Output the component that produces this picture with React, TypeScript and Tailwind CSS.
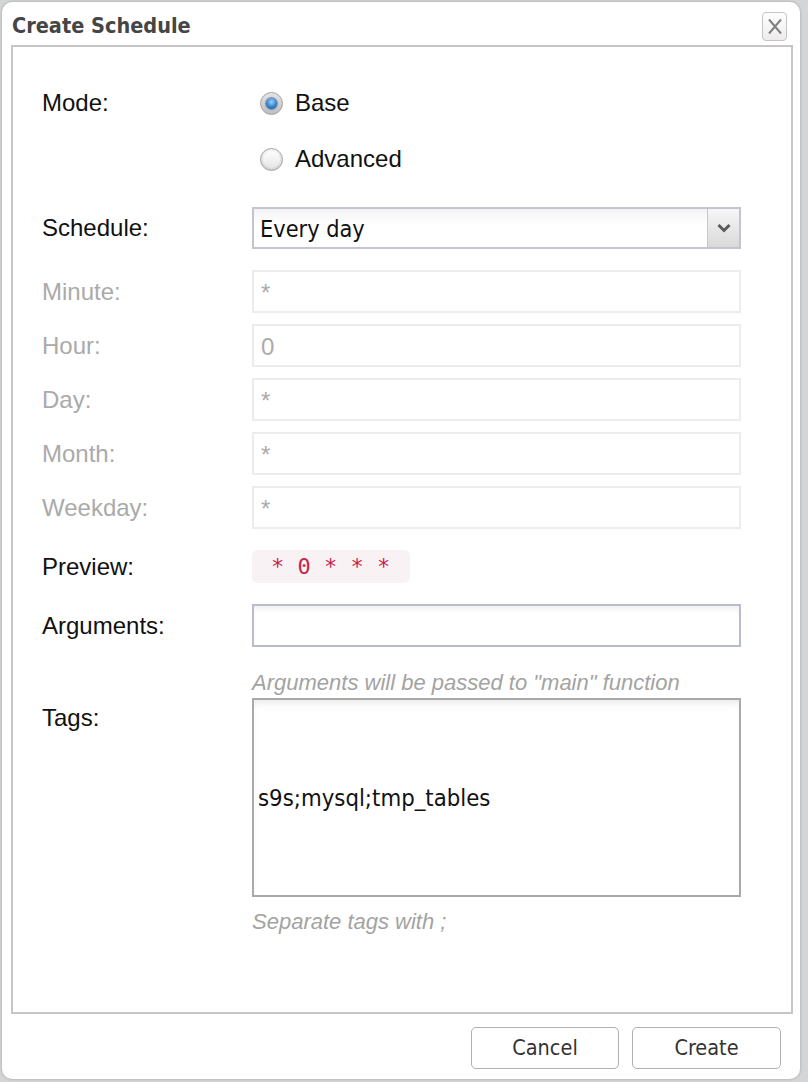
import React from "react";

const TAHOMA = { fontFamily: '"DejaVu Sans Condensed", "DejaVu Sans", sans-serif' };
const HELV = { fontFamily: '"Liberation Sans", Arial, sans-serif' };
const MONO = { fontFamily: '"DejaVu Sans Mono", "Liberation Mono", monospace' };

function Radio({ checked, label }: { checked: boolean; label: string }) {
  return (
    <div className="h-[44px] flex items-center pl-[8px] gap-[12px]">
      <div
        className={
          "w-[23px] h-[23px] rounded-full border border-[#a3a3a3] flex items-center justify-center " +
          (checked
            ? "bg-[linear-gradient(#e4e4e4,#bdbdbd)]"
            : "bg-[linear-gradient(#f4f4f4,#d2d2d2)]")
        }
      >
        {checked ? (
          <div className="w-[11px] h-[11px] rounded-full bg-[radial-gradient(circle_at_50%_35%,#9fd0f5,#2f7cc8_60%,#1c5d9e)] shadow-[0_0_0_1px_#6d8fb3]" />
        ) : (
          <div className="w-[17px] h-[17px] rounded-full bg-[linear-gradient(#fdfdfd,#e6e6e6)]" />
        )}
      </div>
      <span className="text-[24px] text-[#111]" style={HELV}>
        {label}
      </span>
    </div>
  );
}

function DisabledRow({ label, value }: { label: string; value: string }) {
  return (
    <div className="flex mt-[11px] first:mt-0">
      <div className="w-[210px] h-[43px] flex items-center text-[24px] text-[#aaaaaa]" style={HELV}>
        {label}
      </div>
      <div className="w-[489px] h-[43px] border-2 border-[#ececec] flex items-center pl-[7px] pt-[2px] text-[24px] text-[#ababab]" style={HELV}>
        {value}
      </div>
    </div>
  );
}

export default function App() {
  return (
    <div className="w-[808px] h-[1082px] bg-[#d3d5d6] pl-[2px] pt-[2px] overflow-hidden">
      <div className="w-[798px] h-[1077px] bg-white rounded-[10px] flex flex-col shadow-[0_0_3px_rgba(0,0,0,0.25)]">
        {/* header */}
        <div className="h-[43px] pt-[5px] flex items-center justify-between pl-[10px] pr-[13px]">
          <span className="text-[21.5px] font-bold text-[#454545]" style={TAHOMA}>
            Create Schedule
          </span>
          <div className="w-[25px] h-[29px] rounded-[4px] border border-[#c4c4c4] bg-[linear-gradient(#ffffff,#ececec)] flex items-center justify-center">
            <svg width="16" height="19" viewBox="0 0 16 19">
              <path d="M2 2.5 L14 16.5 M14 2.5 L2 16.5" stroke="#808080" strokeWidth="2" fill="none" />
            </svg>
          </div>
        </div>

        {/* panel */}
        <div className="ml-[9px] mr-[7px] h-[969px] border-2 border-[#c9c5c5] flex flex-col pt-[34px] pl-[29px]">
          {/* Mode */}
          <div className="flex">
            <div className="w-[210px] h-[44px] flex items-center text-[24px] text-[#111]" style={HELV}>
              Mode:
            </div>
            <div className="flex flex-col gap-[12px]">
              <Radio checked label="Base" />
              <Radio checked={false} label="Advanced" />
            </div>
          </div>

          {/* Schedule */}
          <div className="flex mt-[26px]">
            <div className="w-[210px] h-[42px] flex items-center text-[24px] text-[#111]" style={HELV}>
              Schedule:
            </div>
            <div className="w-[489px] h-[42px] border-2 border-[#c2c5cf] flex bg-[linear-gradient(#f3f3f3,#ffffff_40%)]">
              <div className="flex-1 flex items-center pl-[6px] pt-[2px] text-[23.3px] text-[#111]" style={TAHOMA}>
                Every day
              </div>
              <div className="w-[32px] border-l border-[#c8c8c8] bg-[linear-gradient(#f7f7f7,#d9d9d9)] flex items-center justify-center">
                <svg width="16" height="12" viewBox="0 0 16 12">
                  <path d="M2.5 3 L8 8.5 L13.5 3" stroke="#5a5a5a" strokeWidth="3" fill="none" />
                </svg>
              </div>
            </div>
          </div>

          {/* disabled fields */}
          <div className="flex flex-col mt-[21px]">
            <DisabledRow label="Minute:" value="*" />
            <DisabledRow label="Hour:" value="0" />
            <DisabledRow label="Day:" value="*" />
            <DisabledRow label="Month:" value="*" />
            <DisabledRow label="Weekday:" value="*" />
          </div>

          {/* Preview */}
          <div className="flex mt-[21px]">
            <div className="w-[210px] h-[33px] flex items-center text-[24px] text-[#111]" style={HELV}>
              Preview:
            </div>
            <div className="h-[33px] w-[158px] rounded-[6px] bg-[#f9f2f4] flex items-center pl-[19px] text-[22px] text-[#c7254e]" style={MONO}>
              * 0 * * *
            </div>
          </div>

          {/* Arguments */}
          <div className="flex mt-[21px]">
            <div className="w-[210px] h-[43px] flex items-center text-[24px] text-[#111]" style={HELV}>
              Arguments:
            </div>
            <div className="w-[489px] h-[43px] border-2 border-[#b9bccb] shadow-[inset_0_5px_6px_-3px_rgba(0,0,0,0.08)]" />
          </div>
          <div className="flex mt-[25px]">
            <div className="w-[210px]" />
            <div className="h-[22px] leading-[22px] text-[22px] italic text-[#a3a3a3]" style={HELV}>
              Arguments will be passed to "main" function
            </div>
          </div>

          {/* Tags */}
          <div className="flex mt-[4px]">
            <div className="w-[210px] pt-[6px] leading-[28px] text-[24px] text-[#111]" style={HELV}>
              Tags:
            </div>
            <div className="w-[489px] h-[199px] border-2 border-[#a9a9a9] shadow-[inset_0_6px_8px_-4px_rgba(0,0,0,0.1)] flex items-center pl-[4px] pt-[2px] text-[23.7px] text-[#111]" style={TAHOMA}>
              s9s;mysql;tmp_tables
            </div>
          </div>
          <div className="flex mt-[14px]">
            <div className="w-[210px]" />
            <div className="h-[22px] leading-[22px] text-[22px] italic text-[#a3a3a3]" style={HELV}>
              Separate tags with ;
            </div>
          </div>
        </div>

        {/* footer */}
        <div className="flex justify-end gap-[13px] pt-[13px] pr-[19px]">
          <button className="w-[148px] h-[42px] rounded-[5px] border border-[#b0b0b0] bg-white text-[21.5px] text-[#333]" style={TAHOMA}>
            Cancel
          </button>
          <button className="w-[149px] h-[42px] rounded-[5px] border border-[#b0b0b0] bg-white text-[21.5px] text-[#333]" style={TAHOMA}>
            Create
          </button>
        </div>
      </div>
    </div>
  );
}
